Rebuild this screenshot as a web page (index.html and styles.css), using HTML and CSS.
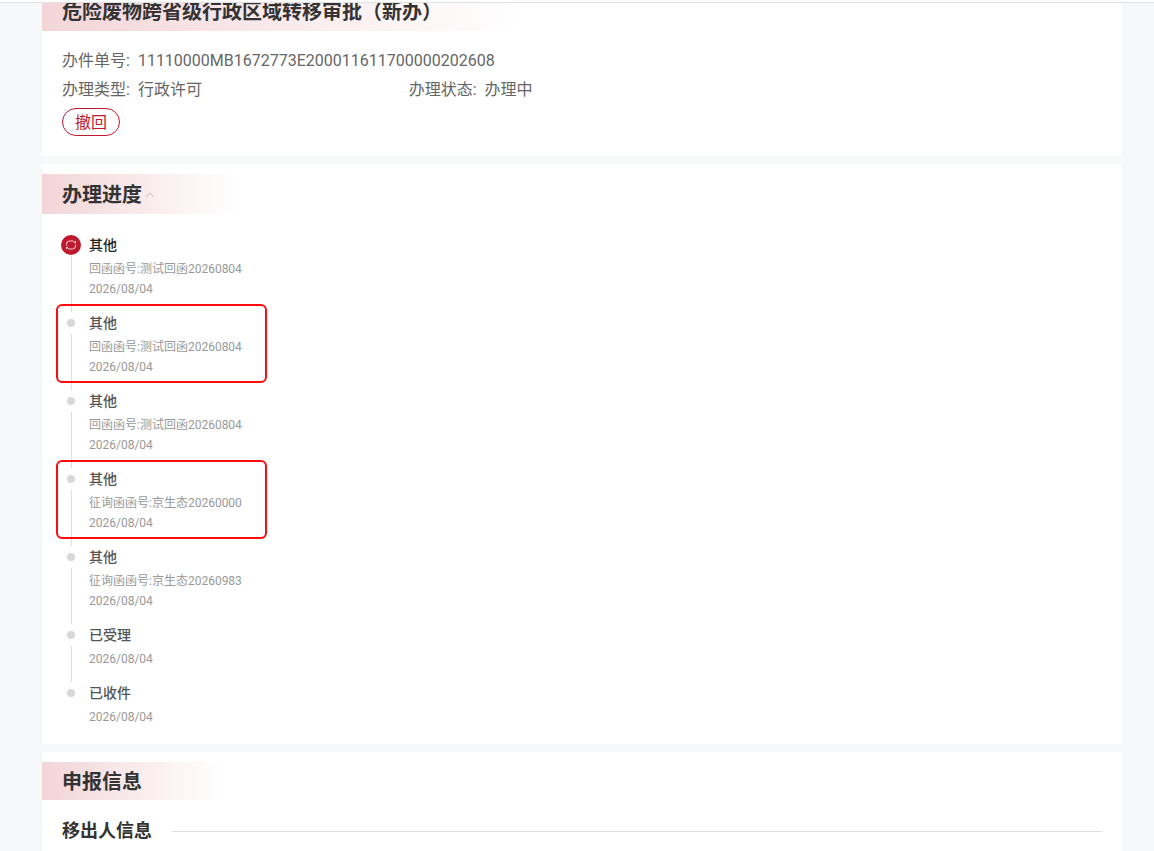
FILE: index.html
```html
<!DOCTYPE html>
<html lang="zh-CN">
<head>
<meta charset="UTF-8">
<meta name="viewport" content="width=device-width, initial-scale=1.0">
<title>办件详情</title>
<link rel="stylesheet" href="styles.css">
</head>
<body>

<header class="top-bar"></header>

<main class="page">
  <section class="card card-base">
    <h1 class="card-title">危险废物跨省级行政区域转移审批（新办）</h1>
    <dl class="info">
      <div class="info-item full">
        <dt>办件单号:</dt>
        <dd>11110000MB1672773E200011611700000202608</dd>
      </div>
      <div class="info-item">
        <dt>办理类型:</dt>
        <dd>行政许可</dd>
      </div>
      <div class="info-item">
        <dt>办理状态:</dt>
        <dd>办理中</dd>
      </div>
    </dl>
    <button type="button" class="btn-recall">撤回</button>
  </section>

  <section class="card card-progress">
    <h2 class="card-title">办理进度<svg class="arrow" viewBox="0 0 16 16"><path d="M4 10l4-4 4 4"/></svg></h2>
    <ol class="steps">
      <li class="step active">
        <div class="step-mark">
          <svg class="step-icon" viewBox="0 0 20 20">
            <circle cx="10" cy="10" r="10"/>
            <path d="M5.500 10.500V9a3 3 0 0 1 3-3h3a3 3 0 0 1 2.500 1.500M14.500 9.500V11a3 3 0 0 1-3 3h-3A3 3 0 0 1 6 12.500M14.500 6v1.800h-1.500M5.500 14v-1.800h1.500"/>
          </svg>
        </div>
        <div class="step-body">
          <h3>其他</h3>
          <p>回函函号:测试回函20260804</p>
          <p>2026/08/04</p>
        </div>
      </li>
      <li class="step marked">
        <div class="step-mark"><i class="dot"></i></div>
        <div class="step-body">
          <h3>其他</h3>
          <p>回函函号:测试回函20260804</p>
          <p>2026/08/04</p>
        </div>
      </li>
      <li class="step">
        <div class="step-mark"><i class="dot"></i></div>
        <div class="step-body">
          <h3>其他</h3>
          <p>回函函号:测试回函20260804</p>
          <p>2026/08/04</p>
        </div>
      </li>
      <li class="step marked">
        <div class="step-mark"><i class="dot"></i></div>
        <div class="step-body">
          <h3>其他</h3>
          <p>征询函函号:京生态20260000</p>
          <p>2026/08/04</p>
        </div>
      </li>
      <li class="step">
        <div class="step-mark"><i class="dot"></i></div>
        <div class="step-body">
          <h3>其他</h3>
          <p>征询函函号:京生态20260983</p>
          <p>2026/08/04</p>
        </div>
      </li>
      <li class="step">
        <div class="step-mark"><i class="dot"></i></div>
        <div class="step-body">
          <h3>已受理</h3>
          <p>2026/08/04</p>
        </div>
      </li>
      <li class="step">
        <div class="step-mark"><i class="dot"></i></div>
        <div class="step-body">
          <h3>已收件</h3>
          <p>2026/08/04</p>
        </div>
      </li>
    </ol>
  </section>

  <section class="card card-declare">
    <h2 class="card-title">申报信息</h2>
    <h3 class="sub-title">移出人信息</h3>
  </section>
</main>

</body>
</html>
```
FILE: styles.css
```css
*,
*::after {
  box-sizing: border-box;
  margin: 0;
  padding: 0;
}

body {
  background: #f6f8fa;
  color: #333;
  font-family: Roboto, "Noto Sans CJK SC", sans-serif;
  font-size: 16px;
}

.top-bar {
  height: 3px;
  background: #fff;
  border-bottom: 1px solid #e0e1e3;
}

.page {
  padding: 0 32px 0 42px;
}

.card {
  margin-bottom: 8px;
  padding: 10px 20px 20px;
  background: #fff;
  overflow: hidden;
}

.card-title {
  display: flex;
  align-items: center;
  width: fit-content;
  height: 40px;
  margin-left: -20px;
  padding: 2px 80px 0 20px;
  background: linear-gradient(to right, #f3d5d8, #fff);
  font-size: 20px;
  font-weight: 700;
  line-height: 38px;
}

.arrow {
  width: 16px;
  height: 16px;
  fill: none;
  stroke: #c4c0c2;
}

/* 基本信息 */
.card-base {
  padding-top: 0;
}

.card-base .card-title {
  margin-top: -12px;
}

.info {
  display: grid;
  grid-template-columns: repeat(3, 1fr);
  row-gap: 5px;
  margin-top: 18px;
  color: #666;
  line-height: 24px;
}

.info-item {
  display: flex;
  gap: 8px;
}

.info-item.full {
  grid-column: 1 / -1;
}

.btn-recall {
  display: block;
  width: 58px;
  height: 28px;
  margin-top: 6px;
  padding-top: 1px;
  background: #fff;
  border: 1px solid #c0192f;
  border-radius: 14px;
  color: #c0192f;
  font-family: inherit;
  font-size: 16px;
  line-height: 24px;
  cursor: pointer;
}

/* 办理进度 */
.card-progress {
  padding-bottom: 17px;
}

.steps {
  margin: 20px 0 0 -1px;
  list-style: none;
}

.step {
  position: relative;
  display: flex;
  gap: 8px;
}

.step-mark {
  display: flex;
  flex-direction: column;
  align-items: center;
  width: 20px;
}

.step-icon {
  width: 20px;
  height: 20px;
  margin: 1px 0;
}

.step-icon circle {
  fill: #c0192f;
}

.step-icon path {
  fill: none;
  stroke: #fff;
  stroke-width: 0.8;
}

.dot {
  width: 8px;
  height: 8px;
  margin: 7px 0;
  border-radius: 50%;
  background: #d8d8d8;
}

.step-mark::after {
  content: "";
  flex: 1;
  width: 1px;
  background: #dcdde3;
}

.step:last-child .step-mark::after {
  display: none;
}

.step-body {
  padding-bottom: 13px;
}

.step:last-child .step-body {
  padding-bottom: 0;
}

.step-body h3 {
  margin-bottom: 3px;
  color: #555;
  font-size: 14px;
  font-weight: 500;
  line-height: 22px;
}

.step.active h3 {
  color: #222;
}

.step-body p {
  color: #999;
  font-size: 12px;
  line-height: 20px;
}

/* 红框标注 */
.step.marked::after {
  content: "";
  position: absolute;
  top: -8px;
  left: -5px;
  width: 211px;
  height: 79px;
  border: 2px solid #f90d0d;
  border-radius: 6px;
}

/* 申报信息 */
.card-declare {
  margin-bottom: 0;
}

.card-declare .card-title {
  height: 38px;
}

.sub-title {
  display: flex;
  align-items: center;
  gap: 20px;
  margin-top: 18px;
  font-size: 18px;
  font-weight: 700;
  line-height: 26px;
}

.sub-title::after {
  content: "";
  flex: 1;
  height: 1px;
  background: #dfe0e4;
}
```
